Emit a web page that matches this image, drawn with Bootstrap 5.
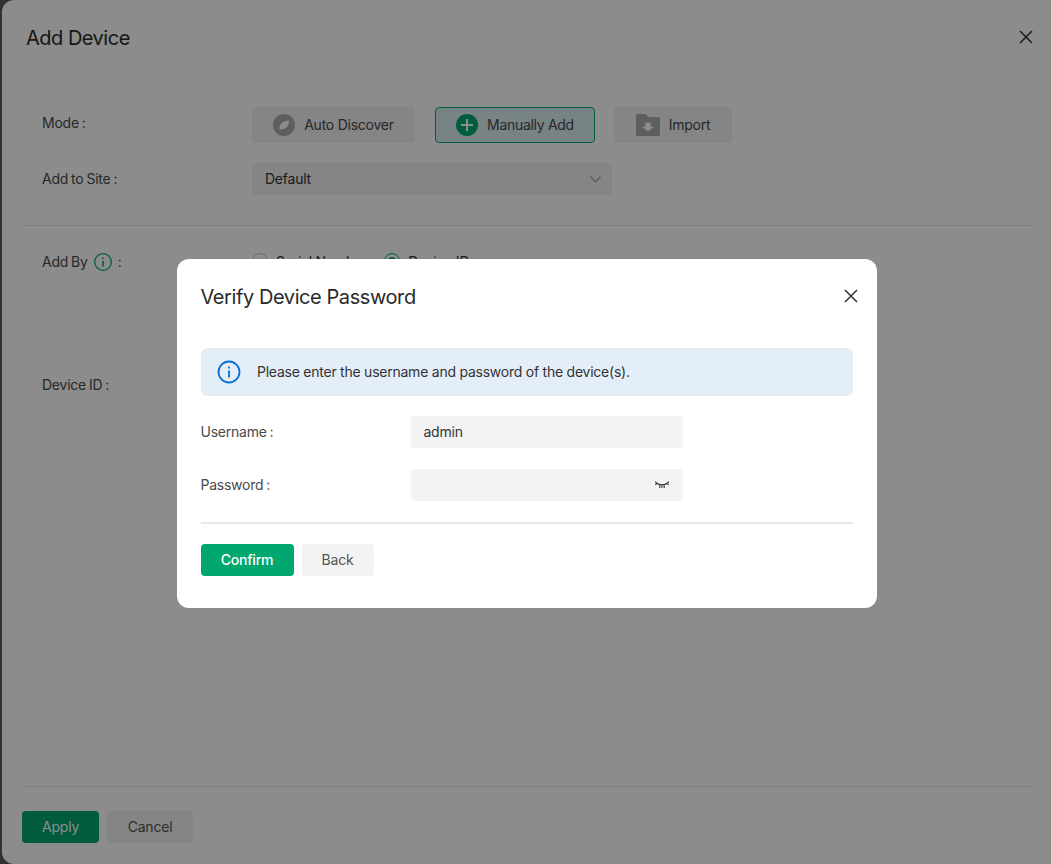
<!DOCTYPE html>
<html lang="en">
<head>
<meta charset="utf-8">
<title>Add Device</title>
<link rel="stylesheet" href="https://cdn.jsdelivr.net/npm/bootstrap@5.3.0/dist/css/bootstrap.min.css">
<style>
html,body{height:864px;overflow:hidden}
body{font-family:Inter,"Noto Sans",sans-serif;font-size:14px;letter-spacing:-.24px;color:#333;background:#5a5a5a;padding-left:2px;position:relative}
.sheet{height:864px;background:#fff;border-radius:12px 0 0 12px;padding:0 19px 0 20px;display:flex;flex-direction:column}
.sheet-head{height:76px;display:flex;align-items:center;justify-content:space-between;padding:0 0 0 4px}
.sheet-title{font-size:20px;font-weight:400;letter-spacing:-.5px;color:#2a2a2a;margin:0}
.x-btn{background:none;border:0;padding:0;line-height:0;color:#333}
.sheet-head .x-btn{margin-right:-1px;margin-bottom:2px}
.form-rows{padding-left:20px}
.label-col{width:210px;flex:none;color:#4a4a4a;word-spacing:-.7px}
.mode-label{padding-bottom:5px}
.site-label{padding-bottom:2px}
.mode-row{margin-top:31px;height:36px}
.mode-btn{height:36px;border:1px solid #f2f2f2;background:#f2f2f2;border-radius:4px;display:flex;align-items:center;justify-content:center;gap:9px;color:#4a4a4a;font-size:14px;padding:0 0 1px;letter-spacing:-.24px}
.mode-btn svg{margin-top:1px}
.mode-auto{width:163px}.mode-man{width:160px;margin:0 19px 0 20px;background:#d9eef0;border-color:#00a870;letter-spacing:-.3px}.mode-imp{width:118px}
.site-row{margin-top:20px;height:32px}
.site-select{width:360px;height:32px;background-color:#f2f2f2;border:0;border-radius:4px;font-size:14px;padding:0 11px 2px 13px;color:#333;display:flex;align-items:center;justify-content:space-between}
.site-select svg{margin-top:2px}
.rule-soft{margin:30px 0 0;border:0;border-top:1px solid #e4e4e4;opacity:1;height:0}
.addby-row{margin-top:26px;height:20px;padding-bottom:2px}
.addby-ico{margin:2px 6px 0 6px}
.radio-dot{width:16px;height:16px;border-radius:50%;border:1px solid #c8c8c8;display:inline-block;flex:none}
.radio-on{border-color:#00a870;position:relative}
.radio-on::after{content:"";position:absolute;inset:3px;border-radius:50%;background:#00a870}
.serial-txt{margin-right:17px}
.devid-row{margin-top:102px}
.sheet-foot{margin-top:auto;border-top:1px solid #e4e4e4;padding:24px 0 21px;display:flex;gap:8px}
.act-btn{height:32px;border-radius:4px;font-size:14px;border:0;padding:0 0 2px;font-weight:400;letter-spacing:-.2px}
.act-apply{width:77px;background:#00a870;color:#fff}
.act-cancel{width:86px;background:#f2f2f2;color:#555}
.dim-layer{position:absolute;inset:0;background:rgba(0,0,0,.45);display:flex;justify-content:center;padding:259px 0 0 2px}
.verify-box{width:700px;height:349px;border:0;border-radius:12px;padding:0 24px;background:#fff;display:block}
.verify-head{height:75px;display:flex;align-items:center;justify-content:space-between}
.verify-title{font-size:20px;font-weight:400;letter-spacing:-.42px;color:#2a2a2a;margin:0}
.verify-head .x-btn{margin-right:-5px;margin-bottom:2px}
.verify-note{margin:14px 0 20px;height:48px;background:#e4eef9;border:0;border-radius:6px;padding:0 16px;display:flex;align-items:center;gap:16px;color:#333;font-size:14px}
.verify-note span{padding:0 0 2px .5px}
.field-row{height:32px;display:flex;align-items:center;margin-bottom:21px}
.field-row label{width:210px;flex:none;margin:0 0 2px;color:#4a4a4a;word-spacing:-.7px}
.field-wrap{width:272px;position:relative}
.field-wrap .form-control{height:32px;background:#f3f3f3;border:0;border-radius:4px;padding:0 13px 2px;font-size:14px;color:#333;box-shadow:none;font-family:inherit;letter-spacing:inherit}
.eye-ico{position:absolute;right:14px;top:12px;line-height:0}
.rule-hard{border:0;border-top:2px solid #e9e9e9;opacity:1;margin:0 0 20px}
.act-ok{width:93px;background:#00a870;color:#fff;font-weight:500}
.act-back{width:72px;background:#f3f3f3;color:#555}
</style>
</head>
<body>
<div class="sheet">
  <div class="sheet-head">
    <h2 class="sheet-title">Add Device</h2>
    <button type="button" class="x-btn" aria-label="Close"><svg width="14" height="14" viewBox="0 0 14 14" fill="none" stroke="#333" stroke-width="1.5"><path d="M1 1l12 12M13 1L1 13"/></svg></button>
  </div>
  <div class="form-rows">
    <div class="d-flex align-items-center mode-row">
      <div class="label-col mode-label">Mode :</div>
      <div class="d-flex">
        <button type="button" class="mode-btn mode-auto"><svg width="22" height="22" viewBox="0 0 22 22"><circle cx="11" cy="11" r="11" fill="#a8adab"/><path d="M6.5 15.5C6 10 10 6.5 16 6.5 16 12 12.5 16 6.5 15.5Z" fill="#fff"/></svg>Auto Discover</button>
        <button type="button" class="mode-btn mode-man"><svg width="22" height="22" viewBox="0 0 22 22"><circle cx="11" cy="11" r="11" fill="#00a870"/><path d="M11 5v12M5 11h12" stroke="#fff" stroke-width="2"/></svg>Manually Add</button>
        <button type="button" class="mode-btn mode-imp"><svg width="24" height="22" viewBox="0 0 24 22"><path d="M2 0h7c1 0 1.500.5 2 1.500L12 3h10c1.200 0 2 .8 2 2v15c0 1.200-.8 2-2 2H2c-1.200 0-2-.8-2-2V2C0 .8.800 0 2 0Z" fill="#a8adab"/><path d="M9.500 8.500h5v4H18l-6 5-6-5h3.500Z" fill="#fff"/></svg>Import</button>
      </div>
    </div>
    <div class="d-flex align-items-center site-row">
      <div class="label-col site-label">Add to Site :</div>
      <div class="site-select"><span>Default</span><svg width="11" height="7" viewBox="0 0 11 7" fill="none" stroke="#8a8a8a" stroke-width="1.100"><path d="M.5.500l5 5.500 5-5.500"/></svg></div>
    </div>
  </div>
  <hr class="rule-soft">
  <div class="form-rows">
    <div class="d-flex align-items-center addby-row">
      <div class="label-col d-flex align-items-center">Add By<svg class="addby-ico" width="18" height="18" viewBox="0 0 18 18" fill="none" stroke="#00a870" stroke-width="1.300"><circle cx="9" cy="9" r="8.300"/><path d="M9 8v5.500M9 4.500v1.500" stroke-width="1.600"/></svg>:</div>
      <div class="d-flex align-items-center"><span class="radio-dot me-2"></span><span class="serial-txt">Serial Number</span><span class="radio-dot radio-on me-2"></span><span>Device ID</span></div>
    </div>
    <div class="d-flex devid-row"><div class="label-col">Device ID :</div></div>
  </div>
  <div class="sheet-foot">
    <button type="button" class="act-btn act-apply">Apply</button>
    <button type="button" class="act-btn act-cancel">Cancel</button>
  </div>
</div>

<div class="dim-layer">
  <div class="modal-content verify-box">
    <div class="verify-head">
      <h3 class="verify-title">Verify Device Password</h3>
      <button type="button" class="x-btn" aria-label="Close"><svg width="14" height="14" viewBox="0 0 14 14" fill="none" stroke="#333" stroke-width="1.500"><path d="M1 1l12 12M13 1L1 13"/></svg></button>
    </div>
    <div class="alert verify-note" role="alert">
      <svg width="24" height="24" viewBox="0 0 24 24" fill="none" stroke="#0a6fd1" stroke-width="1.800"><circle cx="12" cy="12" r="10.500"/><path d="M12 10.500v7M12 6.500v2"/></svg>
      <span>Please enter the username and password of the device(s).</span>
    </div>
    <div class="field-row"><label for="u">Username :</label><div class="field-wrap"><input id="u" class="form-control" value="admin"></div></div>
    <div class="field-row"><label for="p">Password :</label><div class="field-wrap"><input id="p" class="form-control" type="password"><span class="eye-ico"><svg width="14" height="8" viewBox="0 0 14 8" fill="none" stroke="#333" stroke-width="1.100"><path d="M1.500 2C4 4.300 10 4.300 12.500 2M0 .8l2.500 1.600M14 .8l-2.500 1.600M0 3.500l2.500-1M14 3.500l-2.500-1M5 3.500L4.700 7M7 4v3M9 3.500l.3 3.500"/></svg></span></div></div>
    <hr class="rule-hard">
    <div class="d-flex gap-2">
      <button type="button" class="act-btn act-ok">Confirm</button>
      <button type="button" class="act-btn act-back">Back</button>
    </div>
  </div>
</div>
<script src="https://cdn.jsdelivr.net/npm/bootstrap@5.3.0/dist/js/bootstrap.bundle.min.js"></script>
</body>
</html>
